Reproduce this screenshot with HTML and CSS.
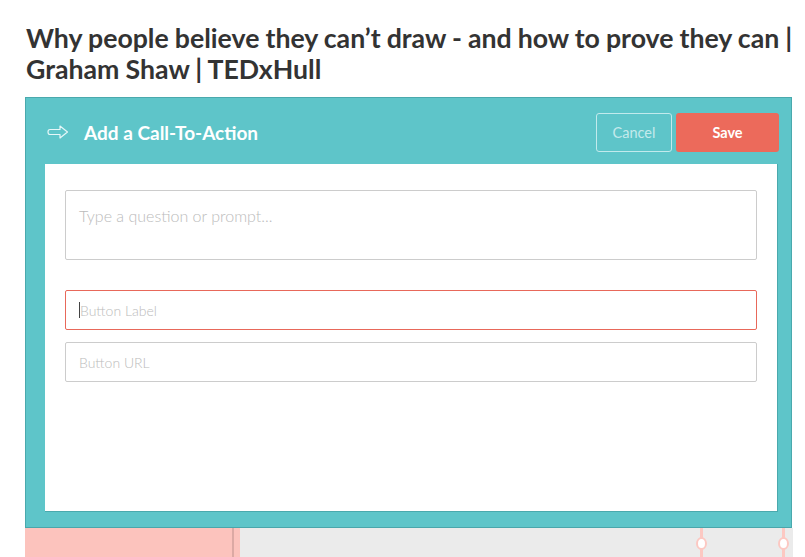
FILE: index.html
```
<!DOCTYPE html>
<html>
<head>
<meta charset="utf-8">
<link rel="stylesheet" href="styles.css">
</head>
<body>
<h1 class="title">Why people believe they can’t draw - and how to prove they can | Graham Shaw | TEDxHull</h1>
<div class="panel">
  <div class="panel-head">
    <div class="head-left">
      <svg class="arrow" width="22" height="14" viewBox="0 0 22 14"><path d="M3 4.5 H13 V1 L20.5 7 L13 13 V9.5 H3 Q1 9.5 1 7 Q1 4.5 3 4.5 Z" fill="none" stroke="#e6f7f8" stroke-width="1.2" stroke-linejoin="round"/></svg>
      <span class="head-title">Add a Call-To-Action</span>
    </div>
    <div class="head-actions">
      <button class="btn btn-cancel">Cancel</button>
      <button class="btn btn-save">Save</button>
    </div>
  </div>
  <div class="panel-body">
    <div class="field field-area">Type a question or prompt...</div>
    <div class="field field-input field-active"><span class="caret"></span>Button Label</div>
    <div class="field field-input field-url">Button URL</div>
  </div>
</div>
<div class="timeline">
  <div class="tl-pink"></div>
  <div class="tl-mark"></div>
  <div class="tl-pink2"></div>
  <div class="tl-gray">
    <span class="pin pin1"></span>
    <span class="pin pin2"></span>
  </div>
</div>
</body>
</html>
```
FILE: styles.css
```
html, body { margin: 0; padding: 0; background: #fff; }
body { font-family: Lato, "Open Sans", sans-serif; width: 805px; height: 557px; overflow: hidden; }
.title {
  margin: 0;
  padding: 23px 0 0 26px;
  font-size: 26.7px;
  word-spacing: -0.45px;
  line-height: 31px;
  font-weight: 700;
  color: #333;
  height: 97px;
  box-sizing: border-box;
}
.panel {
  margin-left: 25px;
  width: 767px;
  height: 431px;
  box-sizing: border-box;
  background: #5ec5c9;
  border: 1px solid #4aa9ad;
  border-bottom-color: #49a6ab;
  padding: 0 13px 15px 19px;
  display: flex;
  flex-direction: column;
}
.panel-head {
  height: 66px;
  display: flex;
  align-items: center;
  justify-content: space-between;
}
.head-left { display: flex; align-items: center; padding-left: 2px; padding-top: 2px; }
.arrow { display: block; margin-right: 15px; }
.head-title { color: #fff; font-weight: 700; font-size: 19px; }
.head-actions { display: flex; gap: 4px; padding-top: 2px; margin-right: -1px; }
.btn {
  font-family: Lato, sans-serif;
  font-size: 14.5px;
  height: 39px;
  border-radius: 3px;
  cursor: pointer;
  padding: 0;
}
.btn-cancel {
  width: 76px;
  background: transparent;
  border: 1px solid #c2eaec;
  color: #c4eaec;
}
.btn-save {
  width: 103px;
  background: #ec6a5b;
  border: none;
  color: #fff;
  font-weight: 700;
}
.panel-body {
  flex: 1;
  background: #fff;
  border-right: 1px solid #4aa9ad;
  border-bottom: 1px solid #4aa9ad;
  padding: 26px 20px 0 20px;
}
.field {
  box-sizing: border-box;
  border: 1px solid #ccc;
  border-radius: 2px;
  color: #bbb;
  font-size: 14px;
  font-weight: 300;
  padding-left: 13px;
}
.field-area { height: 70px; padding-top: 15px; font-size: 16px; }
.field-input { height: 40px; display: flex; align-items: center; }
.field-active { margin-top: 30px; border-color: #e8685a; }
.field-url { margin-top: 12px; }
.caret { display: inline-block; width: 1px; height: 16px; background: #444; }
.timeline { display: flex; margin-left: 25px; width: 768px; height: 29px; }
.tl-pink { width: 207px; background: #fcc3bd; }
.tl-mark { width: 2px; background: #dca9a4; }
.tl-pink2 { width: 6px; background: #fcc3bd; }
.tl-gray { flex: 1; background: #ebebeb; position: relative; }
.pin {
  position: absolute;
  top: 0;
  width: 3px;
  height: 29px;
  background: #fcc8c2;
}
.pin::after {
  content: "";
  position: absolute;
  left: -4px;
  top: 9px;
  width: 7px;
  height: 9px;
  border-radius: 50%;
  background: #fff;
  border: 2px solid #fcc8c2;
}
.pin1 { left: 460px; }
.pin2 { left: 542px; }
```
